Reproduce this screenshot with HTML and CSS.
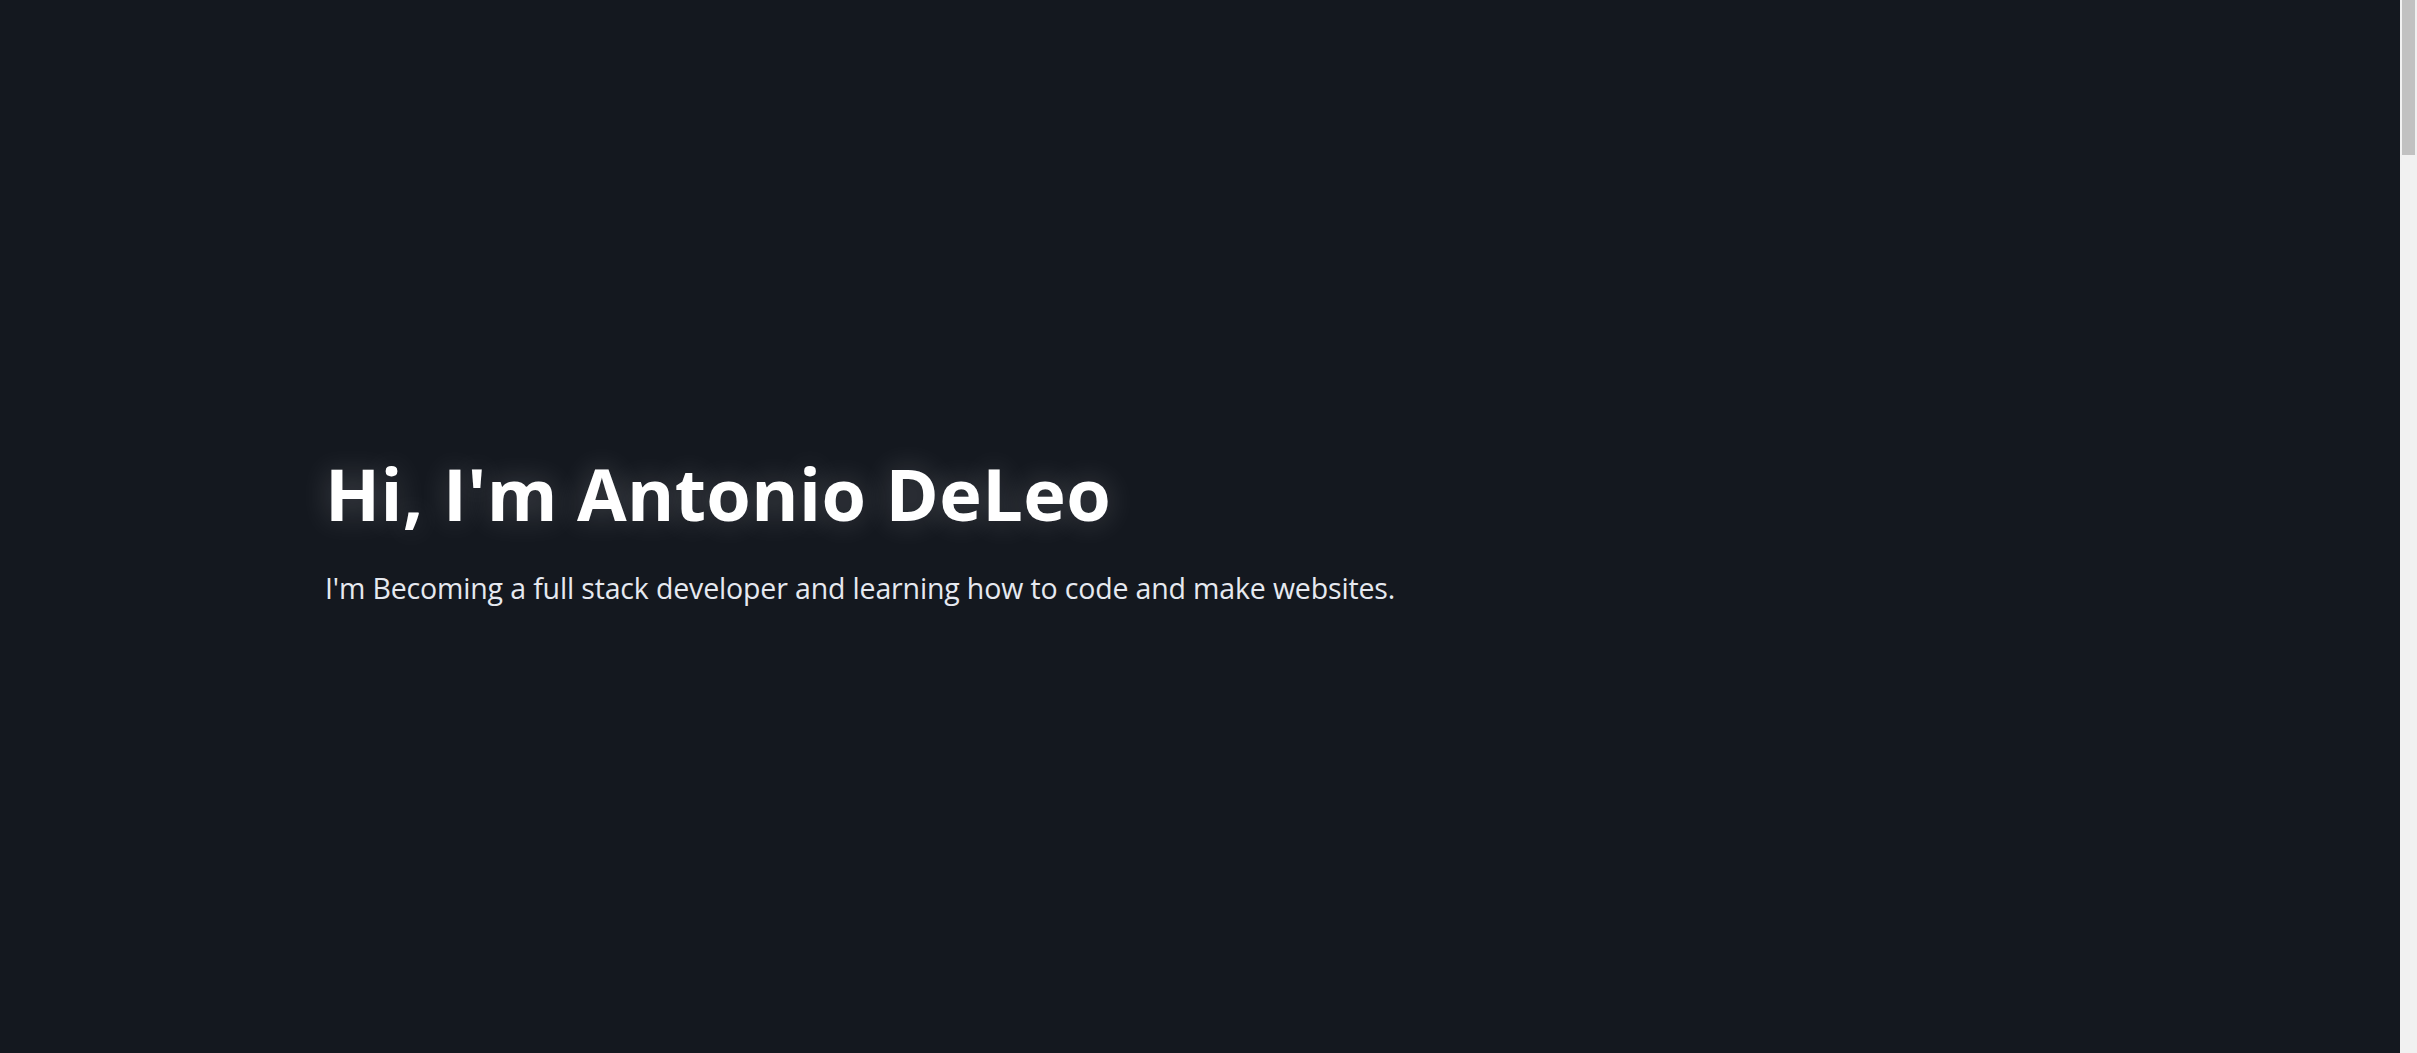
FILE: index.html
```html
<!DOCTYPE html>
<html lang="en">
<head>
<meta charset="utf-8">
<title>Antonio DeLeo</title>
<link rel="stylesheet" href="styles.css">
</head>
<body>
<main class="page">
  <section class="hero">
    <div class="hero-inner">
      <h1 class="hero-title">Hi, I'm Antonio DeLeo</h1>
      <p class="hero-sub">I'm Becoming a full stack developer and learning how to code and make websites.</p>
    </div>
  </section>
</main>
<div class="fake-scrollbar" aria-hidden="true"><div class="fake-thumb"></div></div>
</body>
</html>
```
FILE: styles.css
```css
html {
  background: #14181f;
}
body {
  margin: 0;
  background: #14181f;
  color: #ffffff;
  font-family: "Open Sans", "Noto Sans", sans-serif;
}
.page {
  margin-right: 17px;
}
.hero {
  height: 100vh;
  display: flex;
  align-items: center;
  padding-left: 325px;
  box-sizing: border-box;
}
.hero-inner {
  padding-top: 4px;
}
.hero-title {
  margin: 0;
  font-size: 72px;
  font-weight: 700;
  letter-spacing: 0.4px;
  line-height: 1.2;
  text-shadow: 0 0 30px rgba(255, 255, 255, 0.22);
}
.hero-sub {
  margin: 32px 0 0;
  font-size: 28.5px;
  letter-spacing: -0.15px;
  color: #e6e9f0;
}
.fake-scrollbar {
  position: fixed;
  top: 0;
  right: 0;
  width: 17px;
  height: 100vh;
  background: #f1f1f1;
}
.fake-thumb {
  margin-left: 2px;
  width: 13px;
  height: 155px;
  background: #c1c1c1;
}
```
